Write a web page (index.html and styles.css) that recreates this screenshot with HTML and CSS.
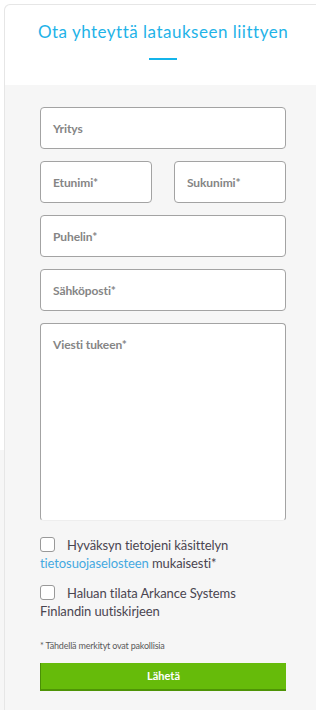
FILE: index.html
```
<!DOCTYPE html>
<html lang="fi">
<head>
    <meta charset="utf-8" />
    <title>Ota yhteyttä lataukseen liittyen</title>
    <link rel="stylesheet" href="styles.css">
</head>
<body>
    <div class="card">
        <div class="card-head">
            <h2 class="title">Ota yhteyttä lataukseen liittyen</h2>
            <span class="title-bar"></span>
        </div>
        <form class="form">
            <div class="field"><span class="ph">Yritys</span></div>
            <div class="row">
                <div class="field"><span class="ph">Etunimi*</span></div>
                <div class="field"><span class="ph">Sukunimi*</span></div>
            </div>
            <div class="field"><span class="ph">Puhelin*</span></div>
            <div class="field"><span class="ph">Sähköposti*</span></div>
            <div class="field area"><span class="ph">Viesti tukeen*</span></div>

            <div class="check">
                <span class="box"></span>Hyväksyn tietojeni käsittelyn <a href="#" class="link">tietosuojaselosteen</a> mukaisesti*
            </div>
            <div class="check">
                <span class="box"></span>Haluan tilata Arkance Systems Finlandin uutiskirjeen
            </div>
            <p class="note">* Tähdellä merkityt ovat pakollisia</p>
            <div class="send">Lähetä</div>
        </form>
    </div>
</body>
</html>
```
FILE: styles.css
```
* {margin: 0;padding: 0;box-sizing: border-box;}
body {font-family: Lato, "Noto Sans", Arial, sans-serif;background: linear-gradient(#fff 0, #fff 450px, #f6f6f6 450px);width: 316px;height: 710px;overflow: hidden;}
/*卡片*/
.card {margin: 4px 0 0 4px;width: 318px;height: 720px;border: 1px solid #e6e6e6;border-bottom: 0;border-radius: 6px 6px 0 0;background: #f6f6f6;}
.card-head {height: 80px;background: #fff;border-radius: 6px 6px 0 0;text-align: center;padding-top: 16px;}
.title {font-size: 17px;font-weight: normal;color: #1fb3e8;line-height: 22px;letter-spacing: 0.5px;}
.title-bar {display: block;width: 28px;height: 2px;background: #14b4ea;margin: 15px auto 0;}
/*表单*/
.form {padding: 22px 35px 0;}
.field {height: 42px;background: #fff;border: 1px solid #a3a3a3;border-radius: 4px;margin-bottom: 12px;padding: 0 12px;display: flex;align-items: center;}
.field.area {height: 198px;align-items: flex-start;padding-top: 13px;border-bottom-color: #eee;margin-bottom: 15px;}
.row {display: flex;gap: 22px;}
.row .field {flex: 1;}
.ph {font-size: 12px;color: #858585;font-weight: bold;letter-spacing: -0.1px;}
.check {font-size: 13px;line-height: 18px;color: #4a4550;margin-bottom: 12px;letter-spacing: -0.1px;}
.box {display: inline-block;width: 15px;height: 15px;border: 1px solid #999;border-radius: 3px;background: #fff;vertical-align: -2px;margin-right: 12px;}
.link {color: #45a9e1;text-decoration: none;}
.note {font-size: 9px;color: #5a5a5a;margin: 20px 0 12px;letter-spacing: -0.2px;}
.send {height: 28px;background: #66bb0a;border-left: 1px solid #4a8f06;border-bottom: 2px solid #4e9406;color: #fff;font-size: 11px;font-weight: bold;text-align: center;line-height: 26px;}
```
